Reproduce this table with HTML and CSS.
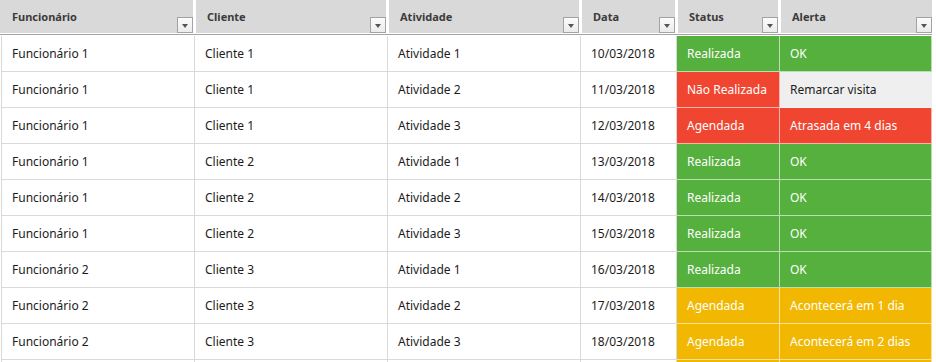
FILE: index.html
```html
<!DOCTYPE html>
<html lang="pt">
<head>
<meta charset="utf-8">
<title>Atividades</title>
<link rel="stylesheet" href="styles.css">
</head>
<body>
<div class="sheet">
  <div class="head">
    <div class="hcell"><span>Funcionário</span><i class="dd"></i></div>
    <div class="hcell"><span>Cliente</span><i class="dd"></i></div>
    <div class="hcell"><span>Atividade</span><i class="dd"></i></div>
    <div class="hcell"><span>Data</span><i class="dd"></i></div>
    <div class="hcell"><span>Status</span><i class="dd"></i></div>
    <div class="hcell"><span>Alerta</span><i class="dd"></i></div>
  </div>
  <div class="headline"></div>

  <div class="row"><div class="c">Funcionário 1</div><div class="c">Cliente 1</div><div class="c">Atividade 1</div><div class="c">10/03/2018</div><div class="c st green">Realizada</div><div class="c st green">OK</div></div>
  <div class="row"><div class="c">Funcionário 1</div><div class="c">Cliente 1</div><div class="c">Atividade 2</div><div class="c">11/03/2018</div><div class="c st red">Não Realizada</div><div class="c st grey">Remarcar visita</div></div>
  <div class="row"><div class="c">Funcionário 1</div><div class="c">Cliente 1</div><div class="c">Atividade 3</div><div class="c">12/03/2018</div><div class="c st red">Agendada</div><div class="c st red">Atrasada em 4 dias</div></div>
  <div class="row"><div class="c">Funcionário 1</div><div class="c">Cliente 2</div><div class="c">Atividade 1</div><div class="c">13/03/2018</div><div class="c st green">Realizada</div><div class="c st green">OK</div></div>
  <div class="row"><div class="c">Funcionário 1</div><div class="c">Cliente 2</div><div class="c">Atividade 2</div><div class="c">14/03/2018</div><div class="c st green">Realizada</div><div class="c st green">OK</div></div>
  <div class="row"><div class="c">Funcionário 1</div><div class="c">Cliente 2</div><div class="c">Atividade 3</div><div class="c">15/03/2018</div><div class="c st green">Realizada</div><div class="c st green">OK</div></div>
  <div class="row"><div class="c">Funcionário 2</div><div class="c">Cliente 3</div><div class="c">Atividade 1</div><div class="c">16/03/2018</div><div class="c st green">Realizada</div><div class="c st green">OK</div></div>
  <div class="row"><div class="c">Funcionário 2</div><div class="c">Cliente 3</div><div class="c">Atividade 2</div><div class="c">17/03/2018</div><div class="c st orange">Agendada</div><div class="c st orange">Acontecerá em 1 dia</div></div>
  <div class="row"><div class="c">Funcionário 2</div><div class="c">Cliente 3</div><div class="c">Atividade 3</div><div class="c">18/03/2018</div><div class="c st orange">Agendada</div><div class="c st orange">Acontecerá em 2 dias</div></div>
  <div class="row"><div class="c"></div><div class="c"></div><div class="c"></div><div class="c"></div><div class="c st orange"></div><div class="c st orange"></div></div>
</div>
</body>
</html>
```

FILE: styles.css
```css
html, body {
  margin: 0;
  padding: 0;
  background: #ffffff;
  overflow: hidden;
}
body {
  font-family: "Noto Sans", "Open Sans", sans-serif;
  font-size: 12px;
  color: #1c1c1c;
}
.sheet {
  width: 932px;
}
.head {
  display: grid;
  grid-template-columns: 195px 193px 193px 96px 103px 152px;
  height: 33px;
}
.hcell {
  background: #d9d9d9;
  border-left: 1px solid #ffffff;
  border-right: 2px solid #ffffff;
  display: flex;
  justify-content: space-between;
  align-items: flex-start;
  padding-left: 11px;
  font-size: 11px;
  font-weight: bold;
  color: #3b3b3b;
}
.hcell:first-child {
  border-left: 0;
  padding-left: 12px;
}
.hcell:last-child {
  border-right: 0;
}
.hcell span {
  padding-top: 9px;
  line-height: 16px;
}
.dd {
  align-self: flex-end;
  width: 14px;
  height: 14px;
  border: 1px solid #a3a3a3;
  background: linear-gradient(#fbfbfb, #ececec);
  display: flex;
  align-items: center;
  justify-content: center;
}
.dd::after {
  content: "";
  width: 0;
  height: 0;
  border-left: 3.5px solid transparent;
  border-right: 3.5px solid transparent;
  border-top: 4px solid #555555;
  margin-top: 1px;
}
.headline {
  height: 1px;
  border-top: 1px solid #ffffff;
  border-bottom: 1px solid #ffffff;
  background: #a5a5a5;
}
.row {
  display: grid;
  grid-template-columns: 194px 193px 193px 96px 103px 152px;
  height: 36px;
  padding-left: 1px;
}
.c {
  border-right: 1px solid #d9d9d9;
  border-bottom: 1px solid #d9d9d9;
  padding-left: 10px;
  display: flex;
  align-items: center;
  white-space: nowrap;
}
.row .c:first-child {
  border-left: 1px solid #d9d9d9;
}
.st {
  color: #ffffff;
  border-right-color: rgba(255, 255, 255, 0.6);
  border-bottom-color: rgba(255, 255, 255, 0.6);
}
.green { background: #55b03e; }
.red { background: #f04631; }
.orange { background: #f2b700; }
.grey { background: #efefef; color: #1c1c1c; border-right-color: #efefef; }
```
